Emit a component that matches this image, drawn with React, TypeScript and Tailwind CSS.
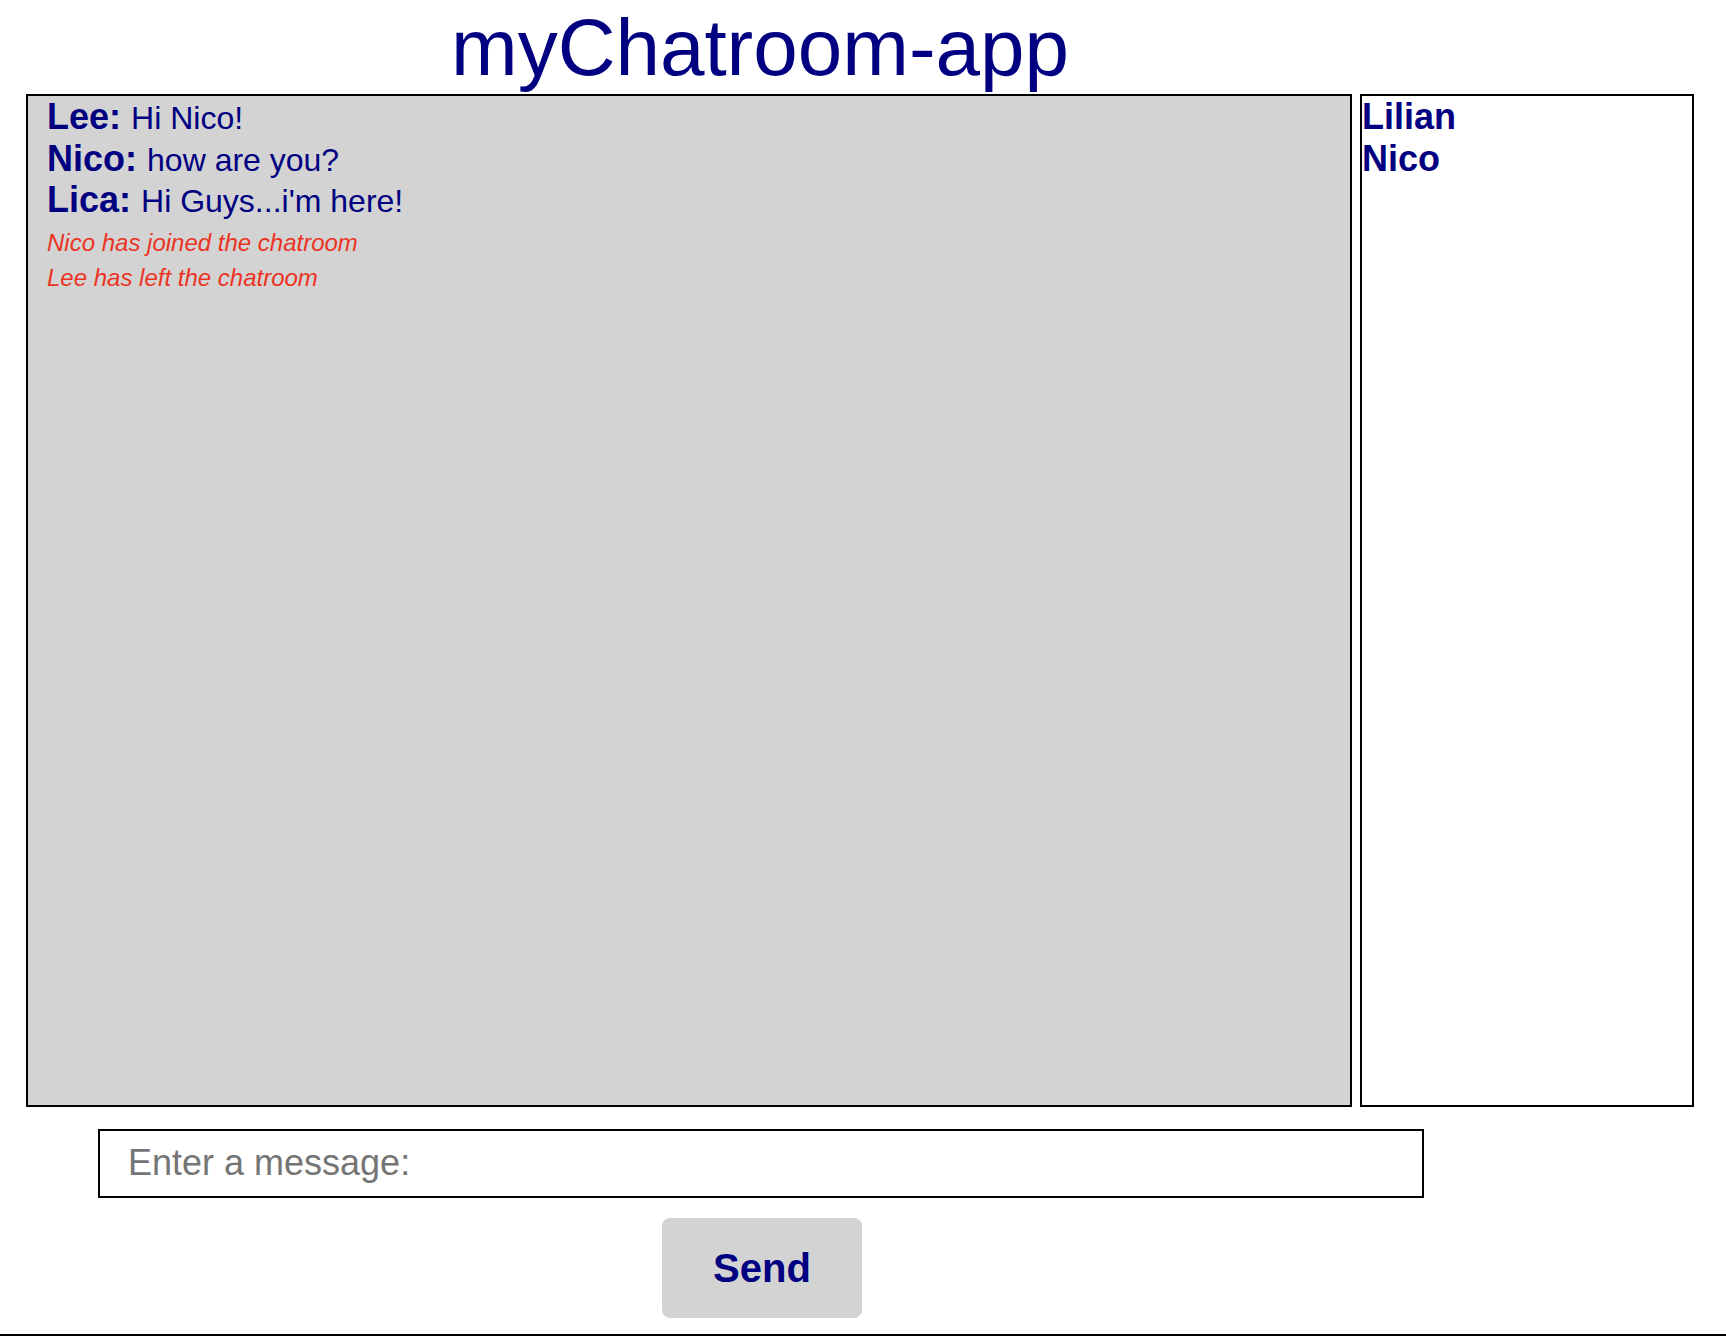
import React from "react";

const messages = [
  { name: "Lee", text: "Hi Nico!" },
  { name: "Nico", text: "how are you?" },
  { name: "Lica", text: "Hi Guys...i'm here!" },
];

const events = ["Nico has joined the chatroom", "Lee has left the chatroom"];

const users = ["Lilian", "Nico"];

export default function App() {
  return (
    <div
      className="w-full bg-white text-[#000080]"
      style={{ fontFamily: '"Liberation Sans", Arial, Helvetica, sans-serif' }}
    >
      <h1 className="w-[1520px] h-[94px] text-center text-[80px] leading-[96px] font-normal m-0">
        myChatroom-app
      </h1>

      <div className="flex gap-[8px] pl-[26px]">
        <div className="w-[1326px] h-[1013px] border-2 border-black bg-[#d3d3d3] pl-[19px]">
          {messages.map((m) => (
            <div key={m.name} className="h-[41.7px] text-[36px] leading-[41px] whitespace-nowrap">
              <span className="font-bold leading-none">{m.name}:</span>{" "}
              <span className="text-[32px] leading-none">{m.text}</span>
            </div>
          ))}
          {events.map((e) => (
            <div key={e} className="mt-[8px] text-[24px] leading-[27px] italic text-[#eb3323]">
              {e}
            </div>
          ))}
        </div>
        <div className="w-[334px] h-[1013px] border-2 border-black bg-white">
          {users.map((u) => (
            <div key={u} className="h-[41.7px] text-[36px] leading-[41px] font-bold">
              {u}
            </div>
          ))}
        </div>
      </div>

      <div className="mt-[22px] pl-[98px]">
        <input
          type="text"
          placeholder="Enter a message:"
          className="block w-[1326px] h-[69px] border-2 border-black bg-white pl-[28px] pb-[2px] text-[36px] text-black placeholder:text-[#757575] outline-none"
        />
      </div>

      <div className="mt-[20px] w-[1524px] flex justify-center">
        <button className="w-[200px] h-[100px] rounded-[8px] bg-[#d3d3d3] text-[40px] font-bold text-[#000080]">
          Send
        </button>
      </div>

      <div className="mt-[16px] border-t-2 border-black" />
    </div>
  );
}
